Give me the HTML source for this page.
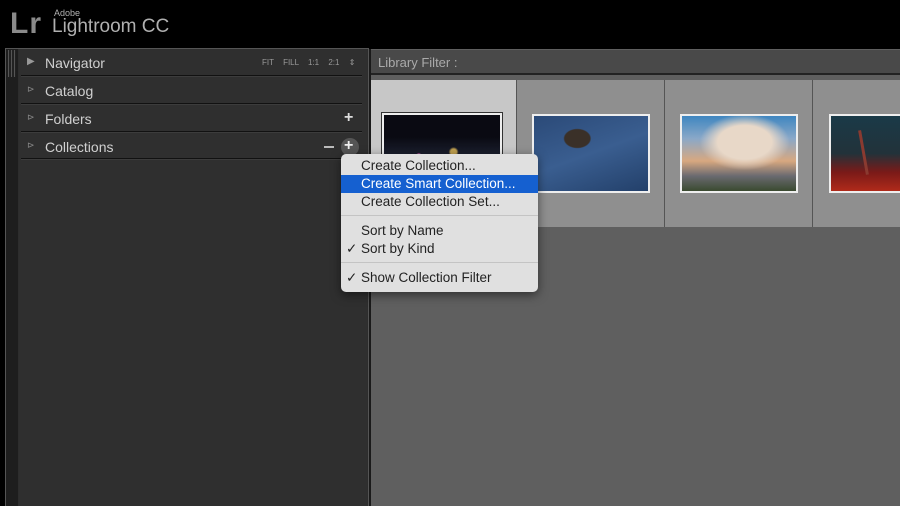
<!DOCTYPE html>
<html><head><style>
*{margin:0;padding:0;box-sizing:border-box}
body{width:900px;height:506px;background:#000;position:relative;overflow:hidden;font-family:"Liberation Sans",sans-serif}
.a{position:absolute}
.hdr{color:#d0d0d0;font-size:14px}
.sep{position:absolute;left:21px;width:341px;height:2px;background:#111;border-bottom:1px solid #3c3c3c}
.mi{position:absolute;left:0;width:197px;height:18px;font-size:13.5px;color:#222;padding-left:20px;line-height:18px}
.ck{position:absolute;left:5px}
</style></head><body>
<div class="a" style="left:10px;top:7px;font-size:30px;font-weight:bold;color:#8a8a8a;letter-spacing:1px">Lr</div>
<div class="a" style="left:54px;top:8px;font-size:9px;color:#b0b0b0">Adobe</div>
<div class="a" style="left:52px;top:16px;font-size:19px;color:#b0b0b0">Lightroom CC</div>
<div class="a" style="left:5px;top:48px;width:364px;height:458px;background:#2d2d2d;border:1px solid #555;border-bottom:none"></div>
<div class="a" style="left:6px;top:49px;width:12px;height:457px;background:#1e1e1e"></div>
<div class="a" style="left:8px;top:50px;width:8px;height:27px;background:repeating-linear-gradient(90deg,#555 0 1px,#222 1px 3px)"></div>
<div class="a" style="left:19px;top:49px;width:348px;height:457px;background:#2f2f2f"></div>
<div class="a hdr" style="left:27px;top:56px;font-size:10px;color:#999">▶</div>
<div class="a hdr" style="left:45px;top:55px">Navigator</div>
<div class="a" style="left:262px;top:58px;font-size:8px;color:#999;word-spacing:7px">FIT FILL 1:1 2:1 ⇕</div>
<div class="sep" style="top:75px"></div>
<div class="a hdr" style="left:27px;top:84px;font-size:9px;color:#888">⊳</div>
<div class="a hdr" style="left:45px;top:83px">Catalog</div>
<div class="sep" style="top:103px"></div>
<div class="a hdr" style="left:27px;top:112px;font-size:9px;color:#888">⊳</div>
<div class="a hdr" style="left:45px;top:111px">Folders</div>
<div class="a" style="left:344px;top:109px;font-size:16px;color:#ddd;font-weight:bold">+</div>
<div class="sep" style="top:131px"></div>
<div class="a hdr" style="left:27px;top:140px;font-size:9px;color:#888">⊳</div>
<div class="a hdr" style="left:45px;top:139px">Collections</div>
<div class="a" style="left:324px;top:146px;width:10px;height:2px;background:#bbb"></div>
<div class="a" style="left:341px;top:138px;width:18px;height:18px;border-radius:50%;background:#555"></div>
<div class="a" style="left:344px;top:137px;font-size:16px;color:#eee;font-weight:bold">+</div>
<div class="sep" style="top:158px"></div>
<div class="a" style="left:369px;top:49px;width:531px;height:457px;background:#5f5f5f;border-left:2px solid #1a1a1a"></div>
<div class="a" style="left:371px;top:50px;width:529px;height:25px;background:#494949;border-bottom:2px solid #222"></div>
<div class="a" style="left:378px;top:55px;font-size:13px;color:#aaa">Library Filter :</div>
<div class="a" style="left:371px;top:80px;width:529px;height:147px;background:#8f8f8f"></div>
<div class="a" style="left:371px;top:80px;width:145px;height:147px;background:#c7c7c7"></div>
<div class="a" style="left:516px;top:80px;width:1px;height:147px;background:#555"></div>
<div class="a" style="left:664px;top:80px;width:1px;height:147px;background:#555"></div>
<div class="a" style="left:812px;top:80px;width:1px;height:147px;background:#555"></div>
<div class="a" style="left:381px;top:112px;width:122px;height:80px;background:#eee;border:1px solid #333"></div>
<div class="a" style="left:384px;top:115px;width:116px;height:74px;background:radial-gradient(circle at 30% 55%,#a04a90 0 2px,transparent 3px),radial-gradient(circle at 60% 50%,#c0a050 0 3px,transparent 5px),linear-gradient(#0a0a12 30%,#1c2030 55%,#4a3a20 75%,#101010)"></div>
<div class="a" style="left:532px;top:114px;width:118px;height:79px;background:#eee"></div>
<div class="a" style="left:534px;top:116px;width:114px;height:75px;background:radial-gradient(ellipse 14px 10px at 38% 30%,#3a3028 0 90%,transparent),linear-gradient(160deg,#2b4a78,#3a5e90 50%,#23406a)"></div>
<div class="a" style="left:680px;top:114px;width:118px;height:79px;background:#eee"></div>
<div class="a" style="left:682px;top:116px;width:114px;height:75px;background:radial-gradient(ellipse 45px 28px at 55% 35%,#e8d8c8 0 60%,transparent),linear-gradient(#3f86c0 0%,#8aa8c8 30%,#d8a880 60%,#6a6a70 80%,#3a4a30)"></div>
<div class="a" style="left:829px;top:114px;width:71px;height:79px;background:#eee"></div>
<div class="a" style="left:831px;top:116px;width:69px;height:75px;background:linear-gradient(#1a3a48,#22323a 50%,#7a1a18 75%,#b02a1a)"></div>
<div class="a" style="left:862px;top:130px;width:3px;height:45px;background:#8a3a30;transform:rotate(-10deg)"></div>
<div class="a" style="left:341px;top:154px;width:197px;height:138px;background:#e0e0e0;border-radius:5px;box-shadow:0 3px 10px rgba(0,0,0,.5)">
<div class="mi" style="top:3px">Create Collection...</div>
<div class="mi" style="top:21px;background:#1560d0;color:#fff">Create Smart Collection...</div>
<div class="mi" style="top:39px">Create Collection Set...</div>
<div class="a" style="left:0;top:61px;width:197px;height:1px;background:#c4c4c4"></div>
<div class="mi" style="top:68px">Sort by Name</div>
<div class="mi" style="top:86px"><span class="ck">✓</span>Sort by Kind</div>
<div class="a" style="left:0;top:108px;width:197px;height:1px;background:#c4c4c4"></div>
<div class="mi" style="top:115px"><span class="ck">✓</span>Show Collection Filter</div>
</div>
</body></html>
